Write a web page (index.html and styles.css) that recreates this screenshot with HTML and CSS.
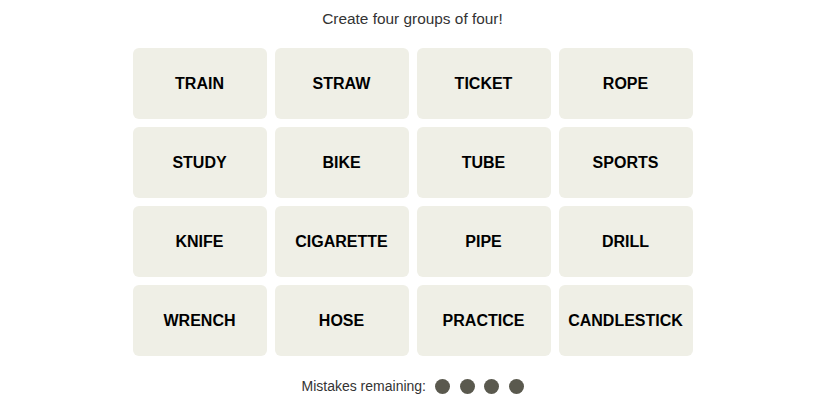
FILE: index.html
```html
<!DOCTYPE html>
<html>
<head>
<meta charset="utf-8">
<link rel="stylesheet" href="styles.css">
</head>
<body>
<main class="game">
  <p class="prompt">Create four groups of four!</p>
  <div class="board">
    <div class="tile">TRAIN</div>
    <div class="tile">STRAW</div>
    <div class="tile">TICKET</div>
    <div class="tile">ROPE</div>
    <div class="tile">STUDY</div>
    <div class="tile">BIKE</div>
    <div class="tile">TUBE</div>
    <div class="tile">SPORTS</div>
    <div class="tile">KNIFE</div>
    <div class="tile">CIGARETTE</div>
    <div class="tile">PIPE</div>
    <div class="tile">DRILL</div>
    <div class="tile">WRENCH</div>
    <div class="tile">HOSE</div>
    <div class="tile">PRACTICE</div>
    <div class="tile">CANDLESTICK</div>
  </div>
  <div class="mistakes">
    <span class="mistakes-label">Mistakes remaining:</span>
    <span class="dots">
      <span class="dot"></span>
      <span class="dot"></span>
      <span class="dot"></span>
      <span class="dot"></span>
    </span>
  </div>
</main>
</body>
</html>
```
FILE: styles.css
```css
html, body {
  margin: 0;
  padding: 0;
  background: #ffffff;
}
.game {
  display: flex;
  flex-direction: column;
  align-items: center;
  font-family: "Liberation Sans", Arial, sans-serif;
}
.prompt {
  margin: 10px 0 0 0;
  font-size: 15.4px;
  line-height: 18px;
  color: #333333;
}
.board {
  margin-top: 20px;
  display: grid;
  grid-template-columns: repeat(4, 134px);
  grid-auto-rows: 71px;
  gap: 8px;
}
.tile {
  background: #efefe6;
  border-radius: 6px;
  display: flex;
  align-items: center;
  justify-content: center;
  font-weight: 700;
  font-size: 16px;
  color: #000000;
}
.mistakes {
  margin-top: 22px;
  display: flex;
  align-items: center;
  gap: 9px;
  font-size: 14px;
  color: #333333;
}
.dots {
  display: flex;
  gap: 9.5px;
}
.dot {
  width: 15px;
  height: 15px;
  border-radius: 50%;
  background: #5a594e;
}
```
